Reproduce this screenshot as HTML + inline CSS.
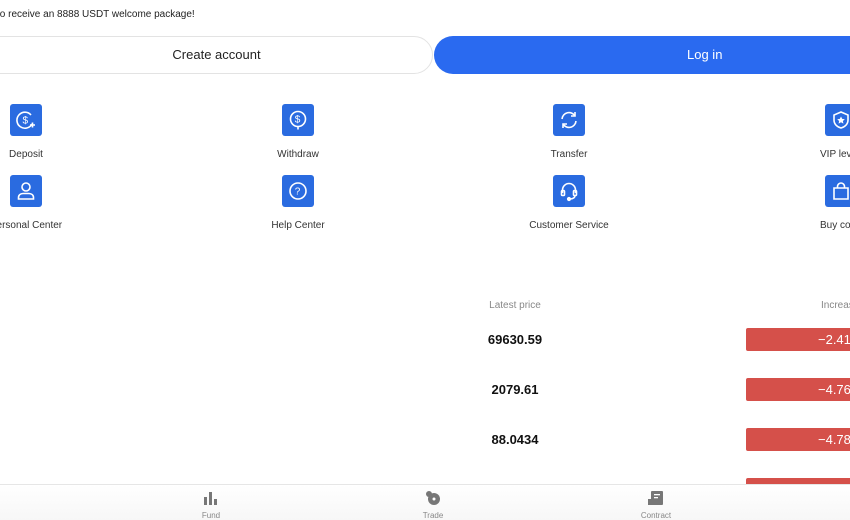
<!DOCTYPE html>
<html><head><meta charset="utf-8"><style>
*{margin:0;padding:0;box-sizing:border-box}
body{width:850px;height:520px;overflow:hidden;background:#fff;font-family:"Liberation Sans",Arial,sans-serif;position:relative;color:#222}
.a{position:absolute}
.ic{position:absolute;width:32px;height:32px;background:#2a6be0;border-radius:3px}
.ic svg{width:32px;height:32px}
.lb{position:absolute;font-size:10px;color:#333;width:160px;text-align:center;white-space:nowrap}
.pr{position:absolute;left:440px;width:150px;text-align:center;font-size:13px;font-weight:bold;color:#111}
.bar{position:absolute;left:746px;width:120px;height:23px;background:#d5504a;border-radius:2px;color:#fff;font-size:13px;line-height:23px;padding-left:72px}
.nv{position:absolute;top:511px;font-size:8px;color:#888;width:80px;text-align:center}
</style></head><body>
<div class="a" style="left:-3px;top:9px;font-size:10px;color:#222">to receive an 8888 USDT welcome package!</div>
<div class="a" style="left:-40px;top:36px;width:473px;height:38px;border:1px solid #e3e3e3;border-radius:19px;text-align:center;line-height:36px;font-size:13px;padding-left:40px">Create account</div>
<div class="a" style="left:434px;top:36px;width:460px;height:38px;background:#2a6af0;border-radius:19px;color:#fff;font-size:13px;line-height:38px;padding-left:253px">Log in</div>

<div class="ic" style="left:10px;top:104px"><svg viewBox="0 0 32 32" fill="none" stroke="#fff" stroke-width="1.6"><path d="M21 11a8 8 0 1 0 1 9"/><text x="12.5" y="19.5" font-size="10" fill="#fff" stroke="none" font-family="Liberation Sans">$</text><path d="M20 21h5M22.5 18.5v5"/></svg></div>
<div class="ic" style="left:282px;top:104px"><svg viewBox="0 0 32 32" fill="none" stroke="#fff" stroke-width="1.6"><circle cx="16" cy="15" r="7.5"/><path d="M16 22.5v3"/><text x="12.8" y="18.5" font-size="10" fill="#fff" stroke="none" font-family="Liberation Sans">$</text></svg></div>
<div class="ic" style="left:553px;top:104px"><svg viewBox="0 0 32 32" fill="none" stroke="#fff" stroke-width="1.6"><path d="M9 15a7 7 0 0 1 13-3M23 17a7 7 0 0 1-13 3"/><path d="M22 8v4h-4M10 24v-4h4"/></svg></div>
<div class="ic" style="left:825px;top:104px"><svg viewBox="0 0 32 32" fill="none" stroke="#fff" stroke-width="1.6"><path d="M16 8l7 3v5c0 4-3 7-7 8-4-1-7-4-7-8v-5z"/><path d="M16 12.5l1.2 2.4 2.6.3-1.9 1.8.5 2.6-2.4-1.3-2.4 1.3.5-2.6-1.9-1.8 2.6-.3z" fill="#fff" stroke="none"/></svg></div>

<div class="ic" style="left:10px;top:175px"><svg viewBox="0 0 32 32" fill="none" stroke="#fff" stroke-width="1.6"><circle cx="16" cy="12" r="4"/><path d="M8.5 24v-1.5c0-2.5 2-4 4.5-4h6c2.5 0 4.5 1.5 4.5 4V24z"/></svg></div>
<div class="ic" style="left:282px;top:175px"><svg viewBox="0 0 32 32" fill="none" stroke="#fff" stroke-width="1.6"><circle cx="16" cy="16" r="8"/><text x="12.8" y="19.5" font-size="10" fill="#fff" stroke="none" font-family="Liberation Sans">?</text></svg></div>
<div class="ic" style="left:553px;top:175px"><svg viewBox="0 0 32 32" fill="none" stroke="#fff" stroke-width="1.6"><path d="M9.5 18v-3a6.5 6.5 0 0 1 13 0v3"/><rect x="8.5" y="15.5" width="3" height="5" rx="1"/><rect x="20.5" y="15.5" width="3" height="5" rx="1"/><path d="M22 20.5c0 2-2 3.5-5 3.5"/><circle cx="16" cy="24" r="1.3" fill="#fff"/></svg></div>
<div class="ic" style="left:825px;top:175px"><svg viewBox="0 0 32 32" fill="none" stroke="#fff" stroke-width="1.6"><path d="M9 13h14v11H9z"/><path d="M12.5 13v-1.5a3.5 3.5 0 0 1 7 0V13"/></svg></div>

<div class="lb" style="left:-54px;top:149px">Deposit</div>
<div class="lb" style="left:218px;top:149px">Withdraw</div>
<div class="lb" style="left:489px;top:149px">Transfer</div>
<div class="lb" style="left:820px;top:149px;text-align:left">VIP level</div>
<div class="lb" style="left:-54px;top:220px">Personal Center</div>
<div class="lb" style="left:218px;top:220px">Help Center</div>
<div class="lb" style="left:489px;top:220px">Customer Service</div>
<div class="lb" style="left:820px;top:220px;text-align:left">Buy coins</div>

<div class="a" style="left:440px;top:300px;width:150px;text-align:center;font-size:10px;color:#888">Latest price</div>
<div class="a" style="left:821px;top:300px;font-size:10px;color:#888">Increase</div>
<div class="pr" style="top:332px">69630.59</div>
<div class="pr" style="top:382px">2079.61</div>
<div class="pr" style="top:432px">88.0434</div>
<div class="bar" style="top:328px">−2.41%</div>
<div class="bar" style="top:378px">−4.76%</div>
<div class="bar" style="top:428px">−4.78%</div>
<div class="bar" style="top:478px">−4.00%</div>

<div class="a" style="left:0;top:484px;width:850px;height:36px;background:linear-gradient(#fff,#f7f7f7);border-top:1px solid #e6e6e6"></div>
<svg class="a" style="left:204px;top:492px" width="14" height="13" viewBox="0 0 14 13" fill="#777"><rect x="0" y="5" width="3" height="8"/><rect x="5" y="0" width="3" height="13"/><rect x="10" y="7" width="3" height="6"/></svg>
<svg class="a" style="left:425px;top:490px" width="16" height="16" viewBox="0 0 16 16"><circle cx="9" cy="9" r="6" fill="#777"/><circle cx="9" cy="9" r="1.5" fill="#fff"/><circle cx="4" cy="4" r="3" fill="#777"/></svg>
<svg class="a" style="left:648px;top:491px" width="16" height="14" viewBox="0 0 16 14" fill="#777"><rect x="3" y="0" width="12" height="14" rx="1"/><rect x="0" y="8" width="5" height="6"/><rect x="6" y="3" width="6" height="1.3" fill="#fff"/><rect x="6" y="6" width="4" height="1.3" fill="#fff"/></svg>
<div class="nv" style="left:171px">Fund</div>
<div class="nv" style="left:393px">Trade</div>
<div class="nv" style="left:616px">Contract</div>
</body></html>
